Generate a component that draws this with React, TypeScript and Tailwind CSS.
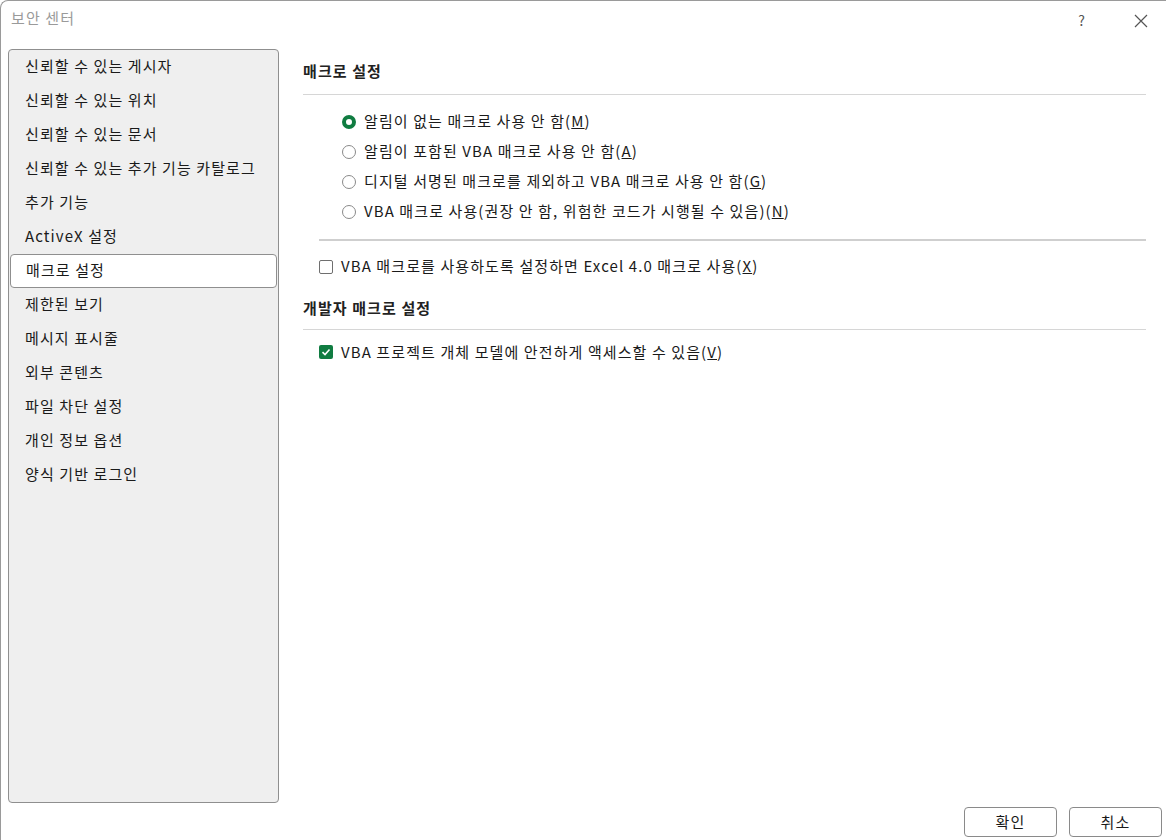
import React from "react";

const nav = [
  "신뢰할 수 있는 게시자",
  "신뢰할 수 있는 위치",
  "신뢰할 수 있는 문서",
  "신뢰할 수 있는 추가 기능 카탈로그",
  "추가 기능",
  "ActiveX 설정",
  "매크로 설정",
  "제한된 보기",
  "메시지 표시줄",
  "외부 콘텐츠",
  "파일 차단 설정",
  "개인 정보 옵션",
  "양식 기반 로그인",
];

const radios: [string, string][] = [
  ["알림이 없는 매크로 사용 안 함(", "M"],
  ["알림이 포함된 VBA 매크로 사용 안 함(", "A"],
  ["디지털 서명된 매크로를 제외하고 VBA 매크로 사용 안 함(", "G"],
  ["VBA 매크로 사용(권장 안 함, 위험한 코드가 시행될 수 있음)(", "N"],
];

function Radio({ on }: { on?: boolean }) {
  return on ? (
    <span className="w-[14px] h-[14px] rounded-full border-[4px] border-[#107c41] bg-white shrink-0" />
  ) : (
    <span className="w-[14px] h-[14px] rounded-full border border-[#8a8a8a] bg-white shrink-0" />
  );
}

export default function App() {
  return (
    <div
      className="w-[1166px] h-[840px] bg-white text-[15px] tracking-[1.1px] text-[#1a1a1a] flex flex-col border-l border-t border-[#9a9a9a] rounded-tl-lg overflow-hidden"
      style={{ fontFamily: '"Noto Sans CJK KR", "Noto Sans", sans-serif' }}
    >
      <div className="h-[40px] flex items-center pl-[10px] pr-[18px]">
        <span className="text-[#9a9a9a] -mt-[5px]">보안 센터</span>
        <span className="ml-auto text-[#555] text-[14px] -mt-[1px]">?</span>
        <svg className="ml-[48px]" width="14" height="14" viewBox="0 0 14 14" stroke="#555" strokeWidth="1.2">
          <path d="M1 1L13 13M13 1L1 13" />
        </svg>
      </div>
      <div className="flex flex-1 pl-[7px] mt-[9px]">
        <div className="w-[271px] h-[754px] bg-[#efefef] border border-[#8f8f8f] rounded-[4px] px-[1px] shrink-0">
          {nav.map((n) => (
            <div
              key={n}
              className={
                "h-[34px] flex items-center pl-[15px] pb-[4px] leading-none " +
                (n === "매크로 설정" ? "bg-white border border-[#8f8f8f] rounded-[4px] pl-[14px]" : "")
              }
            >
              {n}
            </div>
          ))}
        </div>
        <div className="flex-1 pl-[24px] pr-[20px] pt-[11px]">
          <div className="font-semibold text-[#222]">매크로 설정</div>
          <div className="h-px bg-[#d6d6d6] mt-[11px]" />
          <div className="pl-[39px] pt-[12px] flex flex-col">
            {radios.map(([t, k], i) => (
              <div key={k} className="h-[30px] flex items-center gap-[8px]">
                <Radio on={i === 0} />
                <span>
                  {t}
                  <span className="underline">{k}</span>)
                </span>
              </div>
            ))}
          </div>
          <div className="h-[2px] bg-[#cfcfcf] ml-[16px] mt-[12px]" />
          <div className="flex items-center gap-[8px] ml-[16px] mt-[15px] h-[22px]">
            <span className="w-[14px] h-[14px] border border-[#6f6f6f] rounded-[2px] bg-white" />
            <span>
              VBA 매크로를 사용하도록 설정하면 Excel 4.0 매크로 사용(<span className="underline">X</span>)
            </span>
          </div>
          <div className="font-semibold text-[#222] mt-[19px]">개발자 매크로 설정</div>
          <div className="h-px bg-[#d6d6d6] mt-[10px]" />
          <div className="flex items-center gap-[8px] ml-[16px] mt-[11px] h-[22px]">
            <span className="w-[14px] h-[14px] rounded-[2px] bg-[#107c41] flex items-center justify-center">
              <svg width="10" height="10" viewBox="0 0 10 10" fill="none" stroke="white" strokeWidth="1.6">
                <path d="M1.5 5.2L4 7.5L8.5 2.5" />
              </svg>
            </span>
            <span>
              VBA 프로젝트 개체 모델에 안전하게 액세스할 수 있음(<span className="underline">V</span>)
            </span>
          </div>
        </div>
      </div>
      <div className="flex justify-end gap-[12px] pr-[4px] pb-[3px] pt-[4px]">
        <button className="w-[93px] h-[30px] border border-[#8a8a8a] rounded-[4px] bg-white">확인</button>
        <button className="w-[93px] h-[30px] border border-[#8a8a8a] rounded-[4px] bg-white">취소</button>
      </div>
    </div>
  );
}
